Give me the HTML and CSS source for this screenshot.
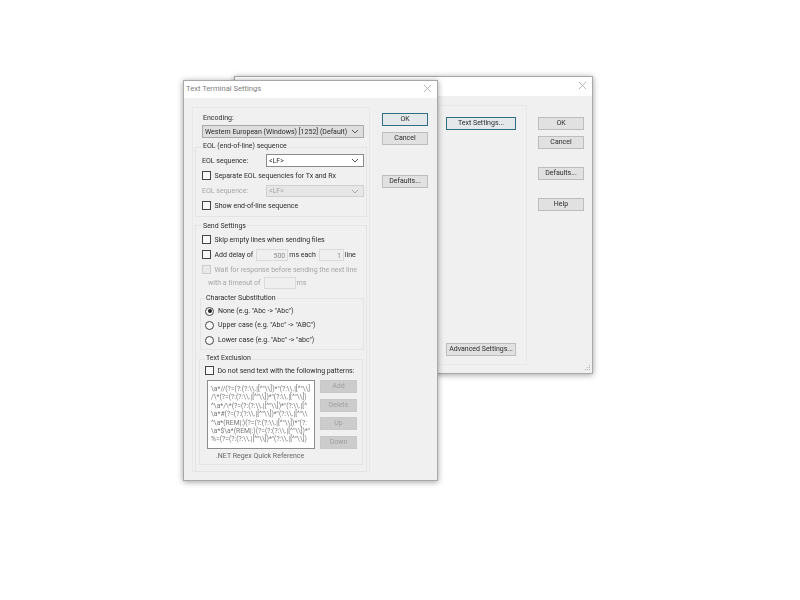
FILE: index.html
```html
<!DOCTYPE html>
<html lang="en">
<head>
<meta charset="utf-8">
<title>Text Terminal Settings</title>
<link rel="stylesheet" href="styles.css">
</head>
<body>
<div class="desktop">
  <section class="window back">
    <header class="titlebar"><span></span><svg class="close" viewBox="0 0 8 8"><path d="M0 0L8 8M8 0L0 8"/></svg></header>
    <div class="back-body">
      <div class="back-group">
        <button class="btn wide focus">Text Settings...</button>
        <button class="btn wide">Advanced Settings...</button>
      </div>
      <div class="back-actions">
        <button class="btn">OK</button>
        <button class="btn">Cancel</button>
        <button class="btn gap-defaults">Defaults...</button>
        <button class="btn gap-help">Help</button>
      </div>
    </div>
    <svg class="grip" viewBox="0 0 8 8"><path d="M6 1h1v1H6zM4 3h1v1H4zM6 3h1v1H6zM2 5h1v1H2zM4 5h1v1H4zM6 5h1v1H6z"/></svg>
  </section>

  <section class="window front">
    <header class="titlebar"><span>Text Terminal Settings</span><svg class="close" viewBox="0 0 8 8"><path d="M0 0L8 8M8 0L0 8"/></svg></header>
    <div class="front-body">
      <div class="outer">
        <div class="label enc-label">Encoding:</div>
        <div class="select enc-select"><span>Western European (Windows) [1252] (Default)</span><svg class="chev" viewBox="0 0 8 5"><path d="M1 1l3 3 3-3"/></svg></div>

        <div class="group eol">
          <div class="legend">EOL (end-of-line) sequence</div>
          <div class="row field-row first">
            <span class="label field-name">EOL sequence:</span>
            <div class="select white"><span>&lt;LF&gt;</span><svg class="chev" viewBox="0 0 8 5"><path d="M1 1l3 3 3-3"/></svg></div>
          </div>
          <label class="row check-row"><i class="check"></i>Separate EOL sequencies for Tx and Rx</label>
          <div class="row field-row off">
            <span class="label field-name">EOL sequence:</span>
            <div class="select disabled"><span>&lt;LF&gt;</span><svg class="chev" viewBox="0 0 8 5"><path d="M1 1l3 3 3-3"/></svg></div>
          </div>
          <label class="row check-row"><i class="check"></i>Show end-of-line sequence</label>
        </div>

        <div class="group send">
          <div class="legend">Send Settings</div>
          <label class="row check-row tight"><i class="check"></i>Skip empty lines when sending files</label>
          <div class="row check-row tight"><i class="check"></i>Add delay of<span class="num">500</span>ms each<span class="num short">1</span>line</div>
          <label class="row check-row tight off"><i class="check dim"></i>Wait for response before sending the next line</label>
          <div class="row timeout off">with a timeout of<span class="num"></span>ms</div>

          <div class="group subst">
            <div class="legend">Character Substitution</div>
            <label class="row radio-row"><i class="radio on"></i>None (e.g. "Abc -&gt; "Abc")</label>
            <label class="row radio-row"><i class="radio"></i>Upper case (e.g. "Abc" -&gt; "ABC")</label>
            <label class="row radio-row lower"><i class="radio"></i>Lower case (e.g. "Abc" -&gt; "abc")</label>
          </div>

          <div class="group exclude">
            <div class="legend">Text Exclusion</div>
            <label class="row check-row"><i class="check"></i>Do not send text with the following patterns:</label>
            <div class="patterns">
              <pre class="list">\a*//(?=(?:(?:\\.|[^"\\])*"(?:\\.|[^"\\]
/\*(?=(?:(?:\\.|[^"\\])*"(?:\\.|[^"\\])
^\a*/\*(?=(?:(?:\\.|[^"\\])*"(?:\\.|[^
\a*#(?=(?:(?:\\.|[^"\\])*"(?:\\.|[^"\\
^\a*(REM|:)(?=(?:(?:\\.|[^"\\])*"(?:
\a*$\a*(REM|:)(?=(?:(?:\\.|[^"\\])*"
%=(?=(?:(?:\\.|[^"\\])*"(?:\\.|[^"\\])</pre>
              <div class="list-actions">
                <button class="btn small">Add</button>
                <button class="btn small">Delete</button>
                <button class="btn small">Up</button>
                <button class="btn small">Down</button>
              </div>
            </div>
            <div class="regex-link">.NET Regex Quick Reference</div>
          </div>
        </div>
      </div>
      <div class="front-actions">
        <button class="btn focus">OK</button>
        <button class="btn">Cancel</button>
        <button class="btn gap-front">Defaults...</button>
      </div>
    </div>
  </section>
</div>
</body>
</html>
```
FILE: styles.css
```css
* { box-sizing: border-box; }
html, body { margin: 0; background: #fff; }
body { width: 800px; height: 600px; overflow: hidden; font: 7px/12px Roboto, "Liberation Sans", sans-serif; color: #2c2c2c; }
.desktop { position: relative; width: 800px; height: 600px; filter: blur(0.4px); }

.window { position: absolute; background: #f0f0f0; border: 1px solid #a8a8a8; box-shadow: 0 1px 6px rgba(0,0,0,.38); }
.back { left: 234px; top: 76px; width: 359px; height: 298px; }
.front { left: 183px; top: 80px; width: 255px; height: 401px; }

.titlebar { display: flex; align-items: center; justify-content: space-between; background: #fff; height: 19px; padding: 0 6px 3px 2px; font-size: 7.6px; color: #808080; }
.front .titlebar { height: 17px; padding-bottom: 2px; }
.close { width: 7px; height: 7px; fill: none; stroke: #a4a4a4; stroke-width: .9; }

.btn { display: block; width: 46px; height: 13px; padding: 0; border: 1px solid #bdbdbd; background: #e1e1e1; font: inherit; line-height: 11px; color: #2c2c2c; text-align: center; white-space: nowrap; }
.btn.focus { border: 1.5px solid #2f6f86; background: #e4e8ea; }
.btn.wide { width: 70px; }

.back-body { display: flex; padding: 9px 0 0 9px; }
.back-group { display: flex; flex-direction: column; justify-content: space-between; width: 283px; height: 260px; padding: 11px 0 8px 201px; border: 1px solid #e8e8e8; }
.back-actions { display: flex; flex-direction: column; gap: 6px; margin: 12px 0 0 11px; }
.gap-defaults { margin-top: 12px; }
.gap-help { margin-top: 12px; }
.grip { position: absolute; right: 1px; bottom: 1px; width: 8px; height: 8px; fill: #b4b4b4; }

.front-body { display: flex; padding: 9px 0 0 8px; }
.outer { width: 178px; height: 365px; padding: 0 2px 0 2px; border: 1px solid #e8e8e8; }
.front-actions { display: flex; flex-direction: column; gap: 6px; margin: 6px 0 0 12px; }
.gap-front { margin-top: 24px; }

.label { color: #2c2c2c; }
.enc-label { margin: 4px 0 0 8px; height: 12px; }
.select { display: flex; align-items: center; justify-content: space-between; height: 13px; padding: 0 4px 0 2px; border: 1px solid #a9a9a9; background: #dedede; white-space: nowrap; }
.enc-select { width: 162px; margin: 1px 0 0 7px; }
.select.white { width: 98px; border-color: #8a8a8a; background: #fff; }
.select.disabled { width: 98px; height: 12px; border-color: #d0d0d0; background: #e6e6e6; }
.chev { width: 8px; height: 5px; fill: none; stroke: #555; stroke-width: 1; }
.disabled .chev { stroke: #aaa; }

.group { border: 1px solid #e4e4e4; }
.legend { width: fit-content; height: 12px; padding: 0 1px; background: #f0f0f0; white-space: nowrap; }
.eol { height: 70px; margin: 9px 0 0 0; padding-left: 6px; }
.eol .legend { margin-top: -8px; }
.row { display: flex; align-items: center; white-space: nowrap; }
.field-row { height: 13px; margin-top: 2px; }
.field-row.off { height: 12px; }
.field-name { width: 64px; }
.off { color: #a6a6a6; }
.off .label { color: #a6a6a6; }
.check-row { height: 14px; margin-top: 2px; }
.check-row.tight { margin-top: 1px; }
.check { flex: none; width: 8.5px; height: 8.5px; margin: -1px 4px 0 0; border: 1px solid #444; background: #f8f8f8; }
.check.dim { border-color: #ccc; background: #e8e8e8; }

.send { height: 247px; margin-top: 8px; padding-left: 6px; }
.send > .legend { margin-top: -6px; }
.num { display: block; width: 32px; height: 12px; margin: 0 1px 0 3px; padding-right: 2px; border: 1px solid #dadada; background: #efefef; color: #8c8c8c; text-align: right; }
.num.short { width: 25px; }
.timeout { height: 12px; padding-left: 6px; }

.subst { height: 52px; margin: 9px 2px 0 -2px; padding-left: 4px; }
.subst .legend { margin-top: -7px; }
.radio-row { height: 14px; }
.radio-row.lower { margin-top: 1px; }
.radio { position: relative; flex: none; width: 9px; height: 9px; margin-right: 4px; border: 1px solid #444; border-radius: 50%; background: #f8f8f8; }
.radio.on::after { content: ""; position: absolute; inset: 1.5px; border-radius: 50%; background: #222; }

.exclude { height: 106px; margin: 9px 3px 0 -3px; padding-left: 5px; }
.exclude .legend { margin-top: -8px; }
.exclude .check-row { margin-top: 0; }
.patterns { display: flex; gap: 5px; margin: 2px 0 0 2px; }
.list { width: 108px; height: 69px; margin: 0; padding: 4px 0 0 3px; overflow: hidden; border: 1px solid #8c8c8c; background: #fff; font: 6.8px/8.4px Roboto, sans-serif; color: #777; }
.list-actions { display: flex; flex-direction: column; gap: 5.5px; }
.btn.small { width: 37px; border-color: #c8c8c8; background: #cccccc; color: #a0a0a0; }
.regex-link { margin: 1px 0 0 11px; color: #666; }
```
